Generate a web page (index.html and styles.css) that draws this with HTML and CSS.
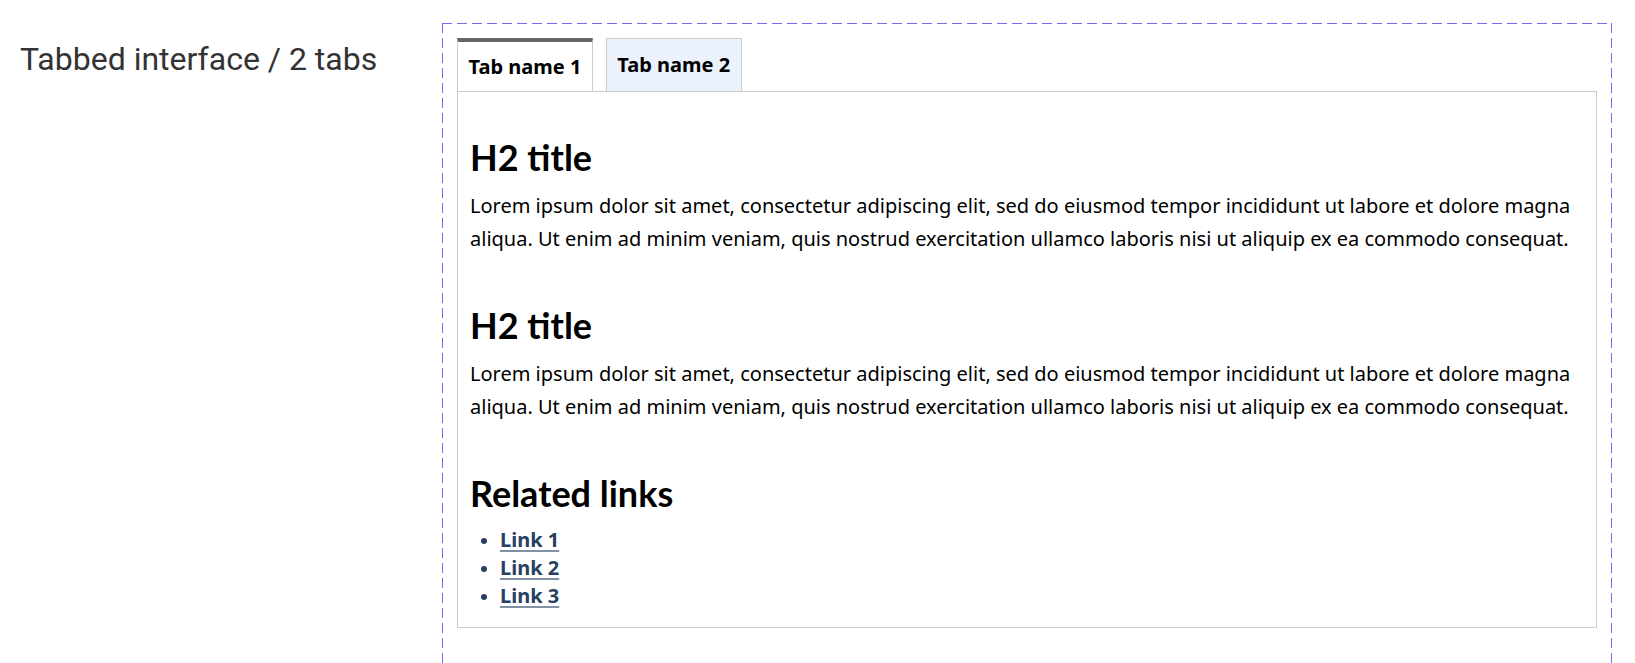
FILE: index.html
```html
<!DOCTYPE html>
<html lang="en">
<head>
<meta charset="utf-8">
<title>Tabbed interface / 2 tabs</title>
<link rel="stylesheet" href="styles.css">
</head>
<body>
<div class="page">
  <div class="label">Tabbed interface / 2 tabs</div>
  <div class="frame">
    <div class="tabs">
      <div class="tablist" role="tablist">
        <div class="tab tab-active" role="tab">Tab name 1</div>
        <div class="tab" role="tab">Tab name 2</div>
      </div>
      <div class="panel" role="tabpanel">
        <h2>H2 title</h2>
        <p>Lorem ipsum dolor sit amet, consectetur adipiscing elit, sed do eiusmod tempor incididunt ut labore et dolore magna aliqua. Ut enim ad minim veniam, quis nostrud exercitation ullamco laboris nisi ut aliquip ex ea commodo consequat.</p>
        <h2>H2 title</h2>
        <p>Lorem ipsum dolor sit amet, consectetur adipiscing elit, sed do eiusmod tempor incididunt ut labore et dolore magna aliqua. Ut enim ad minim veniam, quis nostrud exercitation ullamco laboris nisi ut aliquip ex ea commodo consequat.</p>
        <h2>Related links</h2>
        <ul class="links">
          <li><a href="#">Link 1</a></li>
          <li><a href="#">Link 2</a></li>
          <li><a href="#">Link 3</a></li>
        </ul>
      </div>
    </div>
  </div>
</div>
</body>
</html>
```
FILE: styles.css
```css
html, body {
  margin: 0;
  padding: 0;
  background: #fff;
}

.page {
  display: grid;
  grid-template-columns: 422px 1fr;
  padding: 23px 23px 0 20px;
}

.label {
  font-family: Roboto, "Liberation Sans", sans-serif;
  font-size: 32px;
  line-height: 1.2;
  color: #333;
  padding-top: 17px;
}

.frame {
  padding: 15px 15px 60px 15px;
  background:
    linear-gradient(to right, #7b68ee 10px, transparent 10px) left top / 15px 1px repeat-x,
    linear-gradient(to bottom, #7b68ee 10px, transparent 10px) left top / 1px 15px repeat-y,
    linear-gradient(to bottom, #7b68ee 10px, transparent 10px) right top / 1px 15px repeat-y,
    linear-gradient(to right, #7b68ee 10px, transparent 10px) left bottom / 15px 1px repeat-x;
}

.tablist {
  display: flex;
  gap: 13px;
}

.tab {
  font-family: "Noto Sans", sans-serif;
  font-weight: 700;
  font-size: 20px;
  line-height: 52px;
  height: 52px;
  padding: 0 10.5px;
  border: 1px solid #ccc;
  border-bottom: 0;
  background: #ebf2fc;
  color: #000;
}

.tab-active {
  background: #fff;
  border-top: 4px solid #666;
  height: 49px;
  line-height: 49px;
}

.panel {
  border: 1px solid #ccc;
  padding: 6px 12px 17px 12px;
  font-family: "Noto Sans", sans-serif;
  color: #000;
}

.panel h2 {
  font-family: Lato, sans-serif;
  font-weight: 700;
  font-size: 36px;
  line-height: 1.2;
  margin: 49px 0 10px;
}

.panel h2:first-child {
  margin-top: 38px;
}

.panel p {
  font-size: 20px;
  line-height: 33px;
  margin: 0;
}

.links {
  margin: 9px 0 0;
  padding-left: 30px;
  font-size: 20px;
  line-height: 28px;
  color: #284162;
}

.links li::marker {
  font-size: 18px;
}

.links a {
  color: #284162;
  font-weight: 700;
  text-decoration: underline;
  text-decoration-color: #8391a5;
  text-decoration-thickness: 2px;
  text-underline-offset: 3px;
}
```
